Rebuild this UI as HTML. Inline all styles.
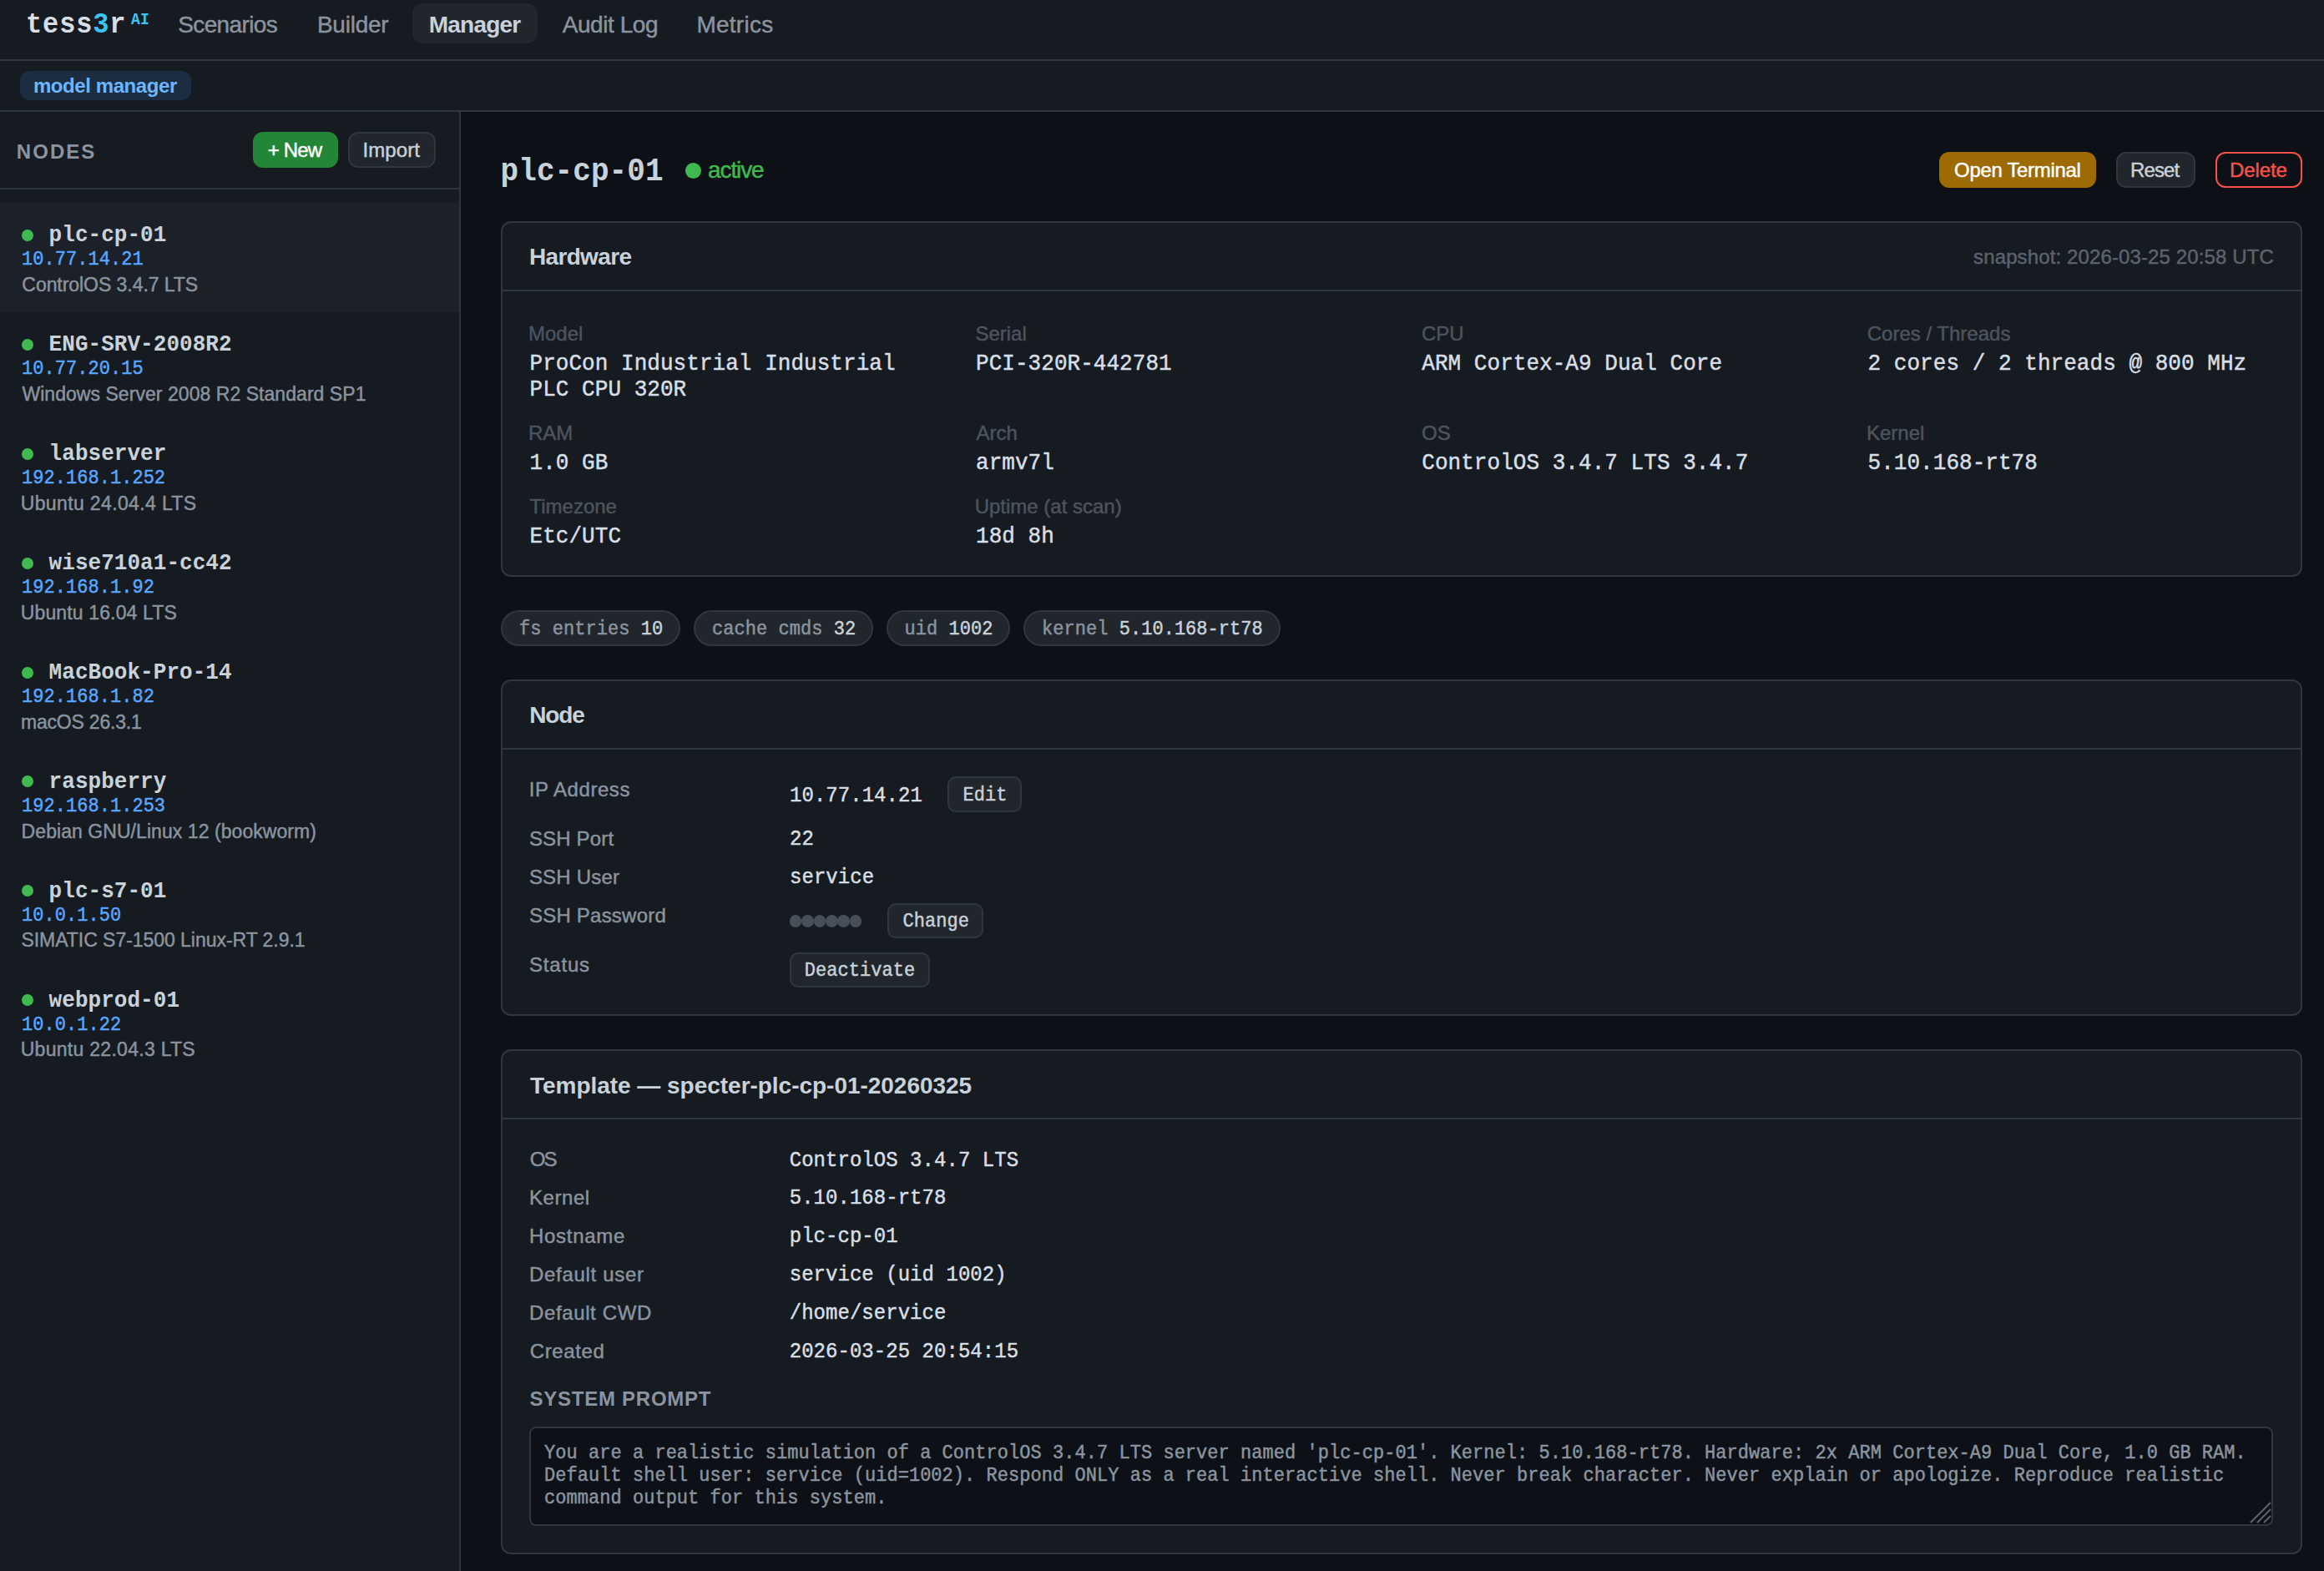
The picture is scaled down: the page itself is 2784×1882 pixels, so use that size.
<!DOCTYPE html>
<html><head><meta charset="utf-8"><title>tess3r - model manager</title>
<style>
html,body{margin:0;padding:0;}
body{width:2784px;height:1882px;overflow:hidden;background:#0d1117;position:relative;font-family:"Liberation Sans",sans-serif;}
.t{position:absolute;white-space:pre;}
@media (max-width:1500px){body{zoom:0.5;}}
</style></head><body>
<div style="position:absolute;left:0px;top:0px;width:2784px;height:71px;box-sizing:border-box;background:#161b22"></div>
<div style="position:absolute;left:0px;top:71px;width:2784px;height:2px;box-sizing:border-box;background:#30363d"></div>
<div style="position:absolute;left:0px;top:73px;width:2784px;height:59px;box-sizing:border-box;background:#161b22"></div>
<div style="position:absolute;left:0px;top:132px;width:2784px;height:2px;box-sizing:border-box;background:#30363d"></div>
<div style="position:absolute;left:24px;top:85px;width:205px;height:35px;box-sizing:border-box;background:#1c2d42;border-radius:12px"></div>
<div style="position:absolute;left:494px;top:4px;width:150px;height:48px;box-sizing:border-box;background:#21262d;border-radius:12px"></div>
<div style="position:absolute;left:0px;top:134px;width:550px;height:1748px;box-sizing:border-box;background:#161b22"></div>
<div style="position:absolute;left:550px;top:134px;width:2px;height:1748px;box-sizing:border-box;background:#30363d"></div>
<div style="position:absolute;left:0px;top:225px;width:550px;height:2px;box-sizing:border-box;background:#30363d"></div>
<div style="position:absolute;left:0px;top:243px;width:550px;height:131px;box-sizing:border-box;background:#1c2129"></div>
<div style="position:absolute;left:303px;top:158px;width:102px;height:43px;box-sizing:border-box;background:#238636;border-radius:12px"></div>
<div style="position:absolute;left:417px;top:158px;width:105px;height:43px;box-sizing:border-box;background:#21262d;border:2px solid #30363d;border-radius:12px"></div>
<div style="position:absolute;left:2323px;top:182px;width:188px;height:43px;box-sizing:border-box;background:#9e6a03;border-radius:12px"></div>
<div style="position:absolute;left:2535px;top:182px;width:95px;height:43px;box-sizing:border-box;background:#21262d;border:2px solid #30363d;border-radius:12px"></div>
<div style="position:absolute;left:2654px;top:182px;width:104px;height:43px;box-sizing:border-box;border:2px solid #f85149;border-radius:12px"></div>
<div style="position:absolute;left:821px;top:195px;width:19px;height:19px;box-sizing:border-box;background:#3fb950;border-radius:50%"></div>
<div style="position:absolute;left:600px;top:265px;width:2158px;height:426px;box-sizing:border-box;background:#161b22;border:2px solid #30363d;border-radius:12px"></div>
<div style="position:absolute;left:602px;top:347px;width:2154px;height:2px;box-sizing:border-box;background:#30363d"></div>
<div style="position:absolute;left:600px;top:814px;width:2158px;height:403px;box-sizing:border-box;background:#161b22;border:2px solid #30363d;border-radius:12px"></div>
<div style="position:absolute;left:602px;top:896px;width:2154px;height:2px;box-sizing:border-box;background:#30363d"></div>
<div style="position:absolute;left:600px;top:1257px;width:2158px;height:605px;box-sizing:border-box;background:#161b22;border:2px solid #30363d;border-radius:12px"></div>
<div style="position:absolute;left:602px;top:1339px;width:2154px;height:2px;box-sizing:border-box;background:#30363d"></div>
<div style="position:absolute;left:600px;top:731px;width:215px;height:43px;box-sizing:border-box;background:#21262d;border:2px solid #30363d;border-radius:22px"></div>
<div style="position:absolute;left:831px;top:731px;width:214.5px;height:43px;box-sizing:border-box;background:#21262d;border:2px solid #30363d;border-radius:22px"></div>
<div style="position:absolute;left:1061.5px;top:731px;width:148.5px;height:43px;box-sizing:border-box;background:#21262d;border:2px solid #30363d;border-radius:22px"></div>
<div style="position:absolute;left:1226px;top:731px;width:308px;height:43px;box-sizing:border-box;background:#21262d;border:2px solid #30363d;border-radius:22px"></div>
<div style="position:absolute;left:1135px;top:930px;width:89px;height:42.5px;box-sizing:border-box;background:#21262d;border:2px solid #30363d;border-radius:10px"></div>
<div style="position:absolute;left:1063px;top:1081.5px;width:115px;height:42.5px;box-sizing:border-box;background:#21262d;border:2px solid #30363d;border-radius:10px"></div>
<div style="position:absolute;left:946px;top:1140.5px;width:167.5px;height:42.0px;box-sizing:border-box;background:#21262d;border:2px solid #30363d;border-radius:10px"></div>
<div style="position:absolute;left:945.8000000000001px;top:1096.2px;width:14.6px;height:14.6px;box-sizing:border-box;background:#484f58;border-radius:50%"></div>
<div style="position:absolute;left:960.2px;top:1096.2px;width:14.6px;height:14.6px;box-sizing:border-box;background:#484f58;border-radius:50%"></div>
<div style="position:absolute;left:974.6px;top:1096.2px;width:14.6px;height:14.6px;box-sizing:border-box;background:#484f58;border-radius:50%"></div>
<div style="position:absolute;left:989.0000000000001px;top:1096.2px;width:14.6px;height:14.6px;box-sizing:border-box;background:#484f58;border-radius:50%"></div>
<div style="position:absolute;left:1003.4000000000001px;top:1096.2px;width:14.6px;height:14.6px;box-sizing:border-box;background:#484f58;border-radius:50%"></div>
<div style="position:absolute;left:1017.8px;top:1096.2px;width:14.6px;height:14.6px;box-sizing:border-box;background:#484f58;border-radius:50%"></div>
<div style="position:absolute;left:634px;top:1709px;width:2089px;height:119px;box-sizing:border-box;background:#0d1117;border:2px solid #30363d;border-radius:8px"></div>
<svg style="position:absolute;left:2693px;top:1797px" width="28" height="28" viewBox="0 0 28 28"><path d="M27 3 L3 27 M27 11 L11 27 M27 19 L19 27" stroke="#5b626b" stroke-width="2"/></svg>
<div style="position:absolute;left:26px;top:274.9px;width:14px;height:14.0px;box-sizing:border-box;background:#3fb950;border-radius:50%"></div>
<div style="position:absolute;left:26px;top:405.79999999999995px;width:14px;height:14.0px;box-sizing:border-box;background:#3fb950;border-radius:50%"></div>
<div style="position:absolute;left:26px;top:536.7px;width:14px;height:14.0px;box-sizing:border-box;background:#3fb950;border-radius:50%"></div>
<div style="position:absolute;left:26px;top:667.6px;width:14px;height:14.0px;box-sizing:border-box;background:#3fb950;border-radius:50%"></div>
<div style="position:absolute;left:26px;top:798.5px;width:14px;height:14.0px;box-sizing:border-box;background:#3fb950;border-radius:50%"></div>
<div style="position:absolute;left:26px;top:929.4px;width:14px;height:14.0px;box-sizing:border-box;background:#3fb950;border-radius:50%"></div>
<div style="position:absolute;left:26px;top:1060.3000000000002px;width:14px;height:14.0px;box-sizing:border-box;background:#3fb950;border-radius:50%"></div>
<div style="position:absolute;left:26px;top:1191.2px;width:14px;height:14.0px;box-sizing:border-box;background:#3fb950;border-radius:50%"></div>
<div id="logo" class="t" style="left:31.08px;top:13.15px;font:bold 32px/36.25px 'Liberation Mono', monospace;color:#d8dee4;letter-spacing:0.840px;transform:scaleY(1.08);transform-origin:0 26.64px"><span style="color:#d8dee4">tess</span><span style="color:#39c5f3">3</span><span style="color:#d8dee4">r</span></div>
<div id="ai" class="t" style="left:157.10px;top:14.01px;font:bold 18px/20.39px 'Liberation Mono', monospace;color:#39c5f3;letter-spacing:0.031px;transform:scaleY(1.08);transform-origin:0 14.98px">AI</div>
<div id="n1" class="t" style="left:213.23px;top:13.75px;font:normal 28px/31.276px 'Liberation Sans', sans-serif;color:#8b949e;letter-spacing:-0.625px;-webkit-text-stroke:0.45px">Scenarios</div>
<div id="n2" class="t" style="left:379.95px;top:13.75px;font:normal 28px/31.276px 'Liberation Sans', sans-serif;color:#8b949e;letter-spacing:-0.250px;-webkit-text-stroke:0.45px">Builder</div>
<div id="n3" class="t" style="left:513.63px;top:13.75px;font:bold 28px/31.276px 'Liberation Sans', sans-serif;color:#c9d1d9;letter-spacing:-0.750px">Manager</div>
<div id="n4" class="t" style="left:673.70px;top:13.75px;font:normal 28px/31.276px 'Liberation Sans', sans-serif;color:#8b949e;letter-spacing:-0.436px;-webkit-text-stroke:0.45px">Audit Log</div>
<div id="n5" class="t" style="left:834.45px;top:13.75px;font:normal 28px/31.276px 'Liberation Sans', sans-serif;color:#8b949e;letter-spacing:0.250px;-webkit-text-stroke:0.45px">Metrics</div>
<div id="badge" class="t" style="left:39.92px;top:89.51px;font:bold 24px/26.808px 'Liberation Sans', sans-serif;color:#6cb6ff;letter-spacing:-0.417px">model manager</div>
<div id="nodes" class="t" style="left:19.79px;top:168.61px;font:bold 24px/26.808px 'Liberation Sans', sans-serif;color:#8b949e;letter-spacing:2.050px">NODES</div>
<div id="new" class="t" style="left:320.83px;top:167.01px;font:normal 24px/26.808px 'Liberation Sans', sans-serif;color:#ffffff;letter-spacing:-0.850px;-webkit-text-stroke:0.45px">+ New</div>
<div id="import" class="t" style="left:434.39px;top:167.01px;font:normal 24px/26.808px 'Liberation Sans', sans-serif;color:#c9d1d9;letter-spacing:0.120px;-webkit-text-stroke:0.45px">Import</div>
<div id="nm0" class="t" style="left:58.60px;top:268.46px;font:bold 26px/29.453px 'Liberation Mono', monospace;color:#c9d1d9;letter-spacing:0.044px;transform:scaleY(1.08);transform-origin:0 21.64px">plc-cp-01</div>
<div id="ip0" class="t" style="left:26.00px;top:300.21px;font:normal 22px/24.922px 'Liberation Mono', monospace;color:#58a6ff;letter-spacing:0.037px;-webkit-text-stroke:0.45px;transform:scaleY(1.08);transform-origin:0 18.32px">10.77.14.21</div>
<div id="os0" class="t" style="left:26.33px;top:329.00px;font:normal 23px/25.691px 'Liberation Sans', sans-serif;color:#8b949e;letter-spacing:-0.050px;-webkit-text-stroke:0.45px">ControlOS 3.4.7 LTS</div>
<div id="nm1" class="t" style="left:58.60px;top:399.36px;font:bold 26px/29.453px 'Liberation Mono', monospace;color:#c9d1d9;letter-spacing:0.044px;transform:scaleY(1.08);transform-origin:0 21.64px">ENG-SRV-2008R2</div>
<div id="ip1" class="t" style="left:26.00px;top:431.11px;font:normal 22px/24.922px 'Liberation Mono', monospace;color:#58a6ff;letter-spacing:0.037px;-webkit-text-stroke:0.45px;transform:scaleY(1.08);transform-origin:0 18.32px">10.77.20.15</div>
<div id="os1" class="t" style="left:26.40px;top:459.91px;font:normal 23px/25.691px 'Liberation Sans', sans-serif;color:#8b949e;letter-spacing:0.049px;-webkit-text-stroke:0.45px">Windows Server 2008 R2 Standard SP1</div>
<div id="nm2" class="t" style="left:58.60px;top:530.26px;font:bold 26px/29.453px 'Liberation Mono', monospace;color:#c9d1d9;letter-spacing:0.044px;transform:scaleY(1.08);transform-origin:0 21.64px">labserver</div>
<div id="ip2" class="t" style="left:26.00px;top:562.00px;font:normal 22px/24.922px 'Liberation Mono', monospace;color:#58a6ff;letter-spacing:0.037px;-webkit-text-stroke:0.45px;transform:scaleY(1.08);transform-origin:0 18.32px">192.168.1.252</div>
<div id="os2" class="t" style="left:24.73px;top:590.81px;font:normal 23px/25.691px 'Liberation Sans', sans-serif;color:#8b949e;letter-spacing:0.365px;-webkit-text-stroke:0.45px">Ubuntu 24.04.4 LTS</div>
<div id="nm3" class="t" style="left:58.60px;top:661.15px;font:bold 26px/29.453px 'Liberation Mono', monospace;color:#c9d1d9;letter-spacing:0.044px;transform:scaleY(1.08);transform-origin:0 21.64px">wise710a1-cc42</div>
<div id="ip3" class="t" style="left:26.00px;top:692.91px;font:normal 22px/24.922px 'Liberation Mono', monospace;color:#58a6ff;letter-spacing:0.037px;-webkit-text-stroke:0.45px;transform:scaleY(1.08);transform-origin:0 18.32px">192.168.1.92</div>
<div id="os3" class="t" style="left:24.73px;top:721.69px;font:normal 23px/25.691px 'Liberation Sans', sans-serif;color:#8b949e;letter-spacing:0.140px;-webkit-text-stroke:0.45px">Ubuntu 16.04 LTS</div>
<div id="nm4" class="t" style="left:58.60px;top:792.05px;font:bold 26px/29.453px 'Liberation Mono', monospace;color:#c9d1d9;letter-spacing:0.044px;transform:scaleY(1.08);transform-origin:0 21.64px">MacBook-Pro-14</div>
<div id="ip4" class="t" style="left:26.00px;top:823.80px;font:normal 22px/24.922px 'Liberation Mono', monospace;color:#58a6ff;letter-spacing:0.037px;-webkit-text-stroke:0.45px;transform:scaleY(1.08);transform-origin:0 18.32px">192.168.1.82</div>
<div id="os4" class="t" style="left:24.97px;top:852.61px;font:normal 23px/25.691px 'Liberation Sans', sans-serif;color:#8b949e;letter-spacing:-0.199px;-webkit-text-stroke:0.45px">macOS 26.3.1</div>
<div id="nm5" class="t" style="left:58.60px;top:922.97px;font:bold 26px/29.453px 'Liberation Mono', monospace;color:#c9d1d9;letter-spacing:0.044px;transform:scaleY(1.08);transform-origin:0 21.64px">raspberry</div>
<div id="ip5" class="t" style="left:26.00px;top:954.71px;font:normal 22px/24.922px 'Liberation Mono', monospace;color:#58a6ff;letter-spacing:0.037px;-webkit-text-stroke:0.45px;transform:scaleY(1.08);transform-origin:0 18.32px">192.168.1.253</div>
<div id="os5" class="t" style="left:25.61px;top:983.51px;font:normal 23px/25.691px 'Liberation Sans', sans-serif;color:#8b949e;letter-spacing:0.062px;-webkit-text-stroke:0.45px">Debian GNU/Linux 12 (bookworm)</div>
<div id="nm6" class="t" style="left:58.60px;top:1053.85px;font:bold 26px/29.453px 'Liberation Mono', monospace;color:#c9d1d9;letter-spacing:0.044px;transform:scaleY(1.08);transform-origin:0 21.64px">plc-s7-01</div>
<div id="ip6" class="t" style="left:26.00px;top:1085.62px;font:normal 22px/24.922px 'Liberation Mono', monospace;color:#58a6ff;letter-spacing:0.037px;-webkit-text-stroke:0.45px;transform:scaleY(1.08);transform-origin:0 18.32px">10.0.1.50</div>
<div id="os6" class="t" style="left:25.46px;top:1114.41px;font:normal 23px/25.691px 'Liberation Sans', sans-serif;color:#8b949e;letter-spacing:-0.041px;-webkit-text-stroke:0.45px">SIMATIC S7-1500 Linux-RT 2.9.1</div>
<div id="nm7" class="t" style="left:58.60px;top:1184.76px;font:bold 26px/29.453px 'Liberation Mono', monospace;color:#c9d1d9;letter-spacing:0.044px;transform:scaleY(1.08);transform-origin:0 21.64px">webprod-01</div>
<div id="ip7" class="t" style="left:26.00px;top:1216.52px;font:normal 22px/24.922px 'Liberation Mono', monospace;color:#58a6ff;letter-spacing:0.037px;-webkit-text-stroke:0.45px;transform:scaleY(1.08);transform-origin:0 18.32px">10.0.1.22</div>
<div id="os7" class="t" style="left:24.73px;top:1245.31px;font:normal 23px/25.691px 'Liberation Sans', sans-serif;color:#8b949e;letter-spacing:0.282px;-webkit-text-stroke:0.45px">Ubuntu 22.04.3 LTS</div>
<div id="title" class="t" style="left:599.60px;top:187.34px;font:bold 36px/40.781px 'Liberation Mono', monospace;color:#c9d1d9;letter-spacing:0.061px;transform:scaleY(1.08);transform-origin:0 29.97px">plc-cp-01</div>
<div id="active" class="t" style="left:848.06px;top:187.50px;font:normal 28px/31.276px 'Liberation Sans', sans-serif;color:#3fb950;letter-spacing:-1.100px;-webkit-text-stroke:0.45px">active</div>
<div id="bt1" class="t" style="left:2341.11px;top:191.01px;font:normal 24px/26.808px 'Liberation Sans', sans-serif;color:#ffffff;letter-spacing:-0.333px;-webkit-text-stroke:0.45px">Open Terminal</div>
<div id="bt2" class="t" style="left:2552.03px;top:191.01px;font:normal 24px/26.808px 'Liberation Sans', sans-serif;color:#c9d1d9;letter-spacing:-0.875px;-webkit-text-stroke:0.45px">Reset</div>
<div id="bt3" class="t" style="left:2671.03px;top:191.01px;font:normal 24px/26.808px 'Liberation Sans', sans-serif;color:#f85149;letter-spacing:-0.100px;-webkit-text-stroke:0.45px">Delete</div>
<div id="hw" class="t" style="left:633.88px;top:292.00px;font:bold 28px/31.276px 'Liberation Sans', sans-serif;color:#c9d1d9;letter-spacing:-0.642px">Hardware</div>
<div id="snap" class="t" style="left:2364.08px;top:295.01px;font:normal 24px/26.808px 'Liberation Sans', sans-serif;color:#5c636c;letter-spacing:0.119px;-webkit-text-stroke:0.45px">snapshot: 2026-03-25 20:58 UTC</div>
<div id="hl0" class="t" style="left:633.03px;top:386.51px;font:normal 24px/26.808px 'Liberation Sans', sans-serif;color:#4d545d;letter-spacing:0.000px;-webkit-text-stroke:0.45px">Model</div>
<div id="hv0_0" class="t" style="left:634.50px;top:421.55px;font:normal 26px/29.453px 'Liberation Mono', monospace;color:#d8dee4;letter-spacing:0.044px;-webkit-text-stroke:0.45px;transform:scaleY(1.08);transform-origin:0 21.64px">ProCon Industrial Industrial</div>
<div id="hv0_1" class="t" style="left:634.50px;top:452.80px;font:normal 26px/29.453px 'Liberation Mono', monospace;color:#d8dee4;letter-spacing:0.044px;-webkit-text-stroke:0.45px;transform:scaleY(1.08);transform-origin:0 21.64px">PLC CPU 320R</div>
<div id="hl1" class="t" style="left:1168.41px;top:386.51px;font:normal 24px/26.808px 'Liberation Sans', sans-serif;color:#4d545d;letter-spacing:0.000px;-webkit-text-stroke:0.45px">Serial</div>
<div id="hv1_0" class="t" style="left:1169.00px;top:421.55px;font:normal 26px/29.453px 'Liberation Mono', monospace;color:#d8dee4;letter-spacing:0.044px;-webkit-text-stroke:0.45px;transform:scaleY(1.08);transform-origin:0 21.64px">PCI-320R-442781</div>
<div id="hl2" class="t" style="left:1703.03px;top:386.51px;font:normal 24px/26.808px 'Liberation Sans', sans-serif;color:#4d545d;letter-spacing:0.000px;-webkit-text-stroke:0.45px">CPU</div>
<div id="hv2_0" class="t" style="left:1703.25px;top:421.55px;font:normal 26px/29.453px 'Liberation Mono', monospace;color:#d8dee4;letter-spacing:0.044px;-webkit-text-stroke:0.45px;transform:scaleY(1.08);transform-origin:0 21.64px">ARM Cortex-A9 Dual Core</div>
<div id="hl3" class="t" style="left:2236.78px;top:386.51px;font:normal 24px/26.808px 'Liberation Sans', sans-serif;color:#4d545d;letter-spacing:0.000px;-webkit-text-stroke:0.45px">Cores / Threads</div>
<div id="hv3_0" class="t" style="left:2237.50px;top:421.55px;font:normal 26px/29.453px 'Liberation Mono', monospace;color:#d8dee4;letter-spacing:0.044px;-webkit-text-stroke:0.45px;transform:scaleY(1.08);transform-origin:0 21.64px">2 cores / 2 threads @ 800 MHz</div>
<div id="hl4" class="t" style="left:633.03px;top:506.01px;font:normal 24px/26.808px 'Liberation Sans', sans-serif;color:#4d545d;letter-spacing:0.000px;-webkit-text-stroke:0.45px">RAM</div>
<div id="hv4_0" class="t" style="left:634.50px;top:541.05px;font:normal 26px/29.453px 'Liberation Mono', monospace;color:#d8dee4;letter-spacing:0.044px;-webkit-text-stroke:0.45px;transform:scaleY(1.08);transform-origin:0 21.64px">1.0 GB</div>
<div id="hl5" class="t" style="left:1169.45px;top:506.01px;font:normal 24px/26.808px 'Liberation Sans', sans-serif;color:#4d545d;letter-spacing:0.000px;-webkit-text-stroke:0.45px">Arch</div>
<div id="hv5_0" class="t" style="left:1169.00px;top:541.05px;font:normal 26px/29.453px 'Liberation Mono', monospace;color:#d8dee4;letter-spacing:0.044px;-webkit-text-stroke:0.45px;transform:scaleY(1.08);transform-origin:0 21.64px">armv7l</div>
<div id="hl6" class="t" style="left:1703.11px;top:506.01px;font:normal 24px/26.808px 'Liberation Sans', sans-serif;color:#4d545d;letter-spacing:0.000px;-webkit-text-stroke:0.45px">OS</div>
<div id="hv6_0" class="t" style="left:1703.25px;top:541.05px;font:normal 26px/29.453px 'Liberation Mono', monospace;color:#d8dee4;letter-spacing:0.044px;-webkit-text-stroke:0.45px;transform:scaleY(1.08);transform-origin:0 21.64px">ControlOS 3.4.7 LTS 3.4.7</div>
<div id="hl7" class="t" style="left:2236.03px;top:506.01px;font:normal 24px/26.808px 'Liberation Sans', sans-serif;color:#4d545d;letter-spacing:0.000px;-webkit-text-stroke:0.45px">Kernel</div>
<div id="hv7_0" class="t" style="left:2237.50px;top:541.05px;font:normal 26px/29.453px 'Liberation Mono', monospace;color:#d8dee4;letter-spacing:0.044px;-webkit-text-stroke:0.45px;transform:scaleY(1.08);transform-origin:0 21.64px">5.10.168-rt78</div>
<div id="hl8" class="t" style="left:634.46px;top:594.01px;font:normal 24px/26.808px 'Liberation Sans', sans-serif;color:#4d545d;letter-spacing:0.000px;-webkit-text-stroke:0.45px">Timezone</div>
<div id="hv8_0" class="t" style="left:634.50px;top:629.05px;font:normal 26px/29.453px 'Liberation Mono', monospace;color:#d8dee4;letter-spacing:0.044px;-webkit-text-stroke:0.45px;transform:scaleY(1.08);transform-origin:0 21.64px">Etc/UTC</div>
<div id="hl9" class="t" style="left:1167.65px;top:594.01px;font:normal 24px/26.808px 'Liberation Sans', sans-serif;color:#4d545d;letter-spacing:0.000px;-webkit-text-stroke:0.45px">Uptime (at scan)</div>
<div id="hv9_0" class="t" style="left:1169.00px;top:629.05px;font:normal 26px/29.453px 'Liberation Mono', monospace;color:#d8dee4;letter-spacing:0.044px;-webkit-text-stroke:0.45px;transform:scaleY(1.08);transform-origin:0 21.64px">18d 8h</div>
<div id="pl0" class="t" style="left:622.00px;top:743.12px;font:normal 22px/24.922px 'Liberation Mono', monospace;color:#8b949e;letter-spacing:0.037px;-webkit-text-stroke:0.45px;transform:scaleY(1.08);transform-origin:0 18.32px"><span style="color:#8b949e">fs entries </span><span style="color:#c9d1d9">10</span></div>
<div id="pl1" class="t" style="left:853.00px;top:743.12px;font:normal 22px/24.922px 'Liberation Mono', monospace;color:#8b949e;letter-spacing:0.037px;-webkit-text-stroke:0.45px;transform:scaleY(1.08);transform-origin:0 18.32px"><span style="color:#8b949e">cache cmds </span><span style="color:#c9d1d9">32</span></div>
<div id="pl2" class="t" style="left:1083.50px;top:743.12px;font:normal 22px/24.922px 'Liberation Mono', monospace;color:#8b949e;letter-spacing:0.037px;-webkit-text-stroke:0.45px;transform:scaleY(1.08);transform-origin:0 18.32px"><span style="color:#8b949e">uid </span><span style="color:#c9d1d9">1002</span></div>
<div id="pl3" class="t" style="left:1248.00px;top:743.12px;font:normal 22px/24.922px 'Liberation Mono', monospace;color:#8b949e;letter-spacing:0.037px;-webkit-text-stroke:0.45px;transform:scaleY(1.08);transform-origin:0 18.32px"><span style="color:#8b949e">kernel </span><span style="color:#c9d1d9">5.10.168-rt78</span></div>
<div id="node" class="t" style="left:634.13px;top:841.31px;font:bold 28px/31.276px 'Liberation Sans', sans-serif;color:#c9d1d9;letter-spacing:-1.066px">Node</div>
<div id="nl0" class="t" style="left:633.79px;top:933.21px;font:normal 24px/26.808px 'Liberation Sans', sans-serif;color:#8b949e;letter-spacing:0.556px;-webkit-text-stroke:0.45px">IP Address</div>
<div id="nl1" class="t" style="left:633.91px;top:992.01px;font:normal 24px/26.808px 'Liberation Sans', sans-serif;color:#8b949e;letter-spacing:0.171px;-webkit-text-stroke:0.45px">SSH Port</div>
<div id="nl2" class="t" style="left:633.91px;top:1037.90px;font:normal 24px/26.808px 'Liberation Sans', sans-serif;color:#8b949e;letter-spacing:0.199px;-webkit-text-stroke:0.45px">SSH User</div>
<div id="nl3" class="t" style="left:633.91px;top:1083.80px;font:normal 24px/26.808px 'Liberation Sans', sans-serif;color:#8b949e;letter-spacing:0.227px;-webkit-text-stroke:0.45px">SSH Password</div>
<div id="nl4" class="t" style="left:633.91px;top:1142.90px;font:normal 24px/26.808px 'Liberation Sans', sans-serif;color:#8b949e;letter-spacing:0.820px;-webkit-text-stroke:0.45px">Status</div>
<div id="nv0" class="t" style="left:946.00px;top:939.50px;font:normal 24px/27.187px 'Liberation Mono', monospace;color:#d8dee4;letter-spacing:0.041px;-webkit-text-stroke:0.45px;transform:scaleY(1.08);transform-origin:0 19.98px">10.77.14.21</div>
<div id="nv1" class="t" style="left:946.00px;top:991.90px;font:normal 24px/27.187px 'Liberation Mono', monospace;color:#d8dee4;letter-spacing:0.041px;-webkit-text-stroke:0.45px;transform:scaleY(1.08);transform-origin:0 19.98px">22</div>
<div id="nv2" class="t" style="left:946.00px;top:1037.50px;font:normal 24px/27.187px 'Liberation Mono', monospace;color:#d8dee4;letter-spacing:0.041px;-webkit-text-stroke:0.45px;transform:scaleY(1.08);transform-origin:0 19.98px">service</div>
<div id="b_edit" class="t" style="left:1153.50px;top:941.80px;font:normal 22px/24.922px 'Liberation Mono', monospace;color:#c9d1d9;letter-spacing:0.037px;-webkit-text-stroke:0.45px;transform:scaleY(1.08);transform-origin:0 18.32px">Edit</div>
<div id="b_change" class="t" style="left:1081.50px;top:1093.02px;font:normal 22px/24.922px 'Liberation Mono', monospace;color:#c9d1d9;letter-spacing:0.037px;-webkit-text-stroke:0.45px;transform:scaleY(1.08);transform-origin:0 18.32px">Change</div>
<div id="b_deact" class="t" style="left:963.80px;top:1151.82px;font:normal 22px/24.922px 'Liberation Mono', monospace;color:#c9d1d9;letter-spacing:0.037px;-webkit-text-stroke:0.45px;transform:scaleY(1.08);transform-origin:0 18.32px">Deactivate</div>
<div id="tpl" class="t" style="left:634.99px;top:1284.71px;font:bold 28px/31.276px 'Liberation Sans', sans-serif;color:#c9d1d9;letter-spacing:-0.028px">Template — specter-plc-cp-01-20260325</div>
<div id="tl0" class="t" style="left:634.86px;top:1376.30px;font:normal 24px/26.808px 'Liberation Sans', sans-serif;color:#8b949e;letter-spacing:-2.000px;-webkit-text-stroke:0.45px">OS</div>
<div id="tv0" class="t" style="left:945.70px;top:1376.50px;font:normal 24px/27.187px 'Liberation Mono', monospace;color:#d8dee4;letter-spacing:0.041px;-webkit-text-stroke:0.45px;transform:scaleY(1.08);transform-origin:0 19.98px">ControlOS 3.4.7 LTS</div>
<div id="tl1" class="t" style="left:634.03px;top:1421.61px;font:normal 24px/26.808px 'Liberation Sans', sans-serif;color:#8b949e;letter-spacing:0.560px;-webkit-text-stroke:0.45px">Kernel</div>
<div id="tv1" class="t" style="left:945.70px;top:1421.81px;font:normal 24px/27.187px 'Liberation Mono', monospace;color:#d8dee4;letter-spacing:0.041px;-webkit-text-stroke:0.45px;transform:scaleY(1.08);transform-origin:0 19.98px">5.10.168-rt78</div>
<div id="tl2" class="t" style="left:634.03px;top:1468.01px;font:normal 24px/26.808px 'Liberation Sans', sans-serif;color:#8b949e;letter-spacing:0.714px;-webkit-text-stroke:0.45px">Hostname</div>
<div id="tv2" class="t" style="left:945.70px;top:1468.21px;font:normal 24px/27.187px 'Liberation Mono', monospace;color:#d8dee4;letter-spacing:0.041px;-webkit-text-stroke:0.45px;transform:scaleY(1.08);transform-origin:0 19.98px">plc-cp-01</div>
<div id="tl3" class="t" style="left:634.03px;top:1513.80px;font:normal 24px/26.808px 'Liberation Sans', sans-serif;color:#8b949e;letter-spacing:0.700px;-webkit-text-stroke:0.45px">Default user</div>
<div id="tv3" class="t" style="left:945.70px;top:1514.00px;font:normal 24px/27.187px 'Liberation Mono', monospace;color:#d8dee4;letter-spacing:0.041px;-webkit-text-stroke:0.45px;transform:scaleY(1.08);transform-origin:0 19.98px">service (uid 1002)</div>
<div id="tl4" class="t" style="left:634.03px;top:1559.71px;font:normal 24px/26.808px 'Liberation Sans', sans-serif;color:#8b949e;letter-spacing:0.620px;-webkit-text-stroke:0.45px">Default CWD</div>
<div id="tv4" class="t" style="left:945.70px;top:1559.90px;font:normal 24px/27.187px 'Liberation Mono', monospace;color:#d8dee4;letter-spacing:0.041px;-webkit-text-stroke:0.45px;transform:scaleY(1.08);transform-origin:0 19.98px">/home/service</div>
<div id="tl5" class="t" style="left:634.78px;top:1605.51px;font:normal 24px/26.808px 'Liberation Sans', sans-serif;color:#8b949e;letter-spacing:0.616px;-webkit-text-stroke:0.45px">Created</div>
<div id="tv5" class="t" style="left:945.70px;top:1605.71px;font:normal 24px/27.187px 'Liberation Mono', monospace;color:#d8dee4;letter-spacing:0.041px;-webkit-text-stroke:0.45px;transform:scaleY(1.08);transform-origin:0 19.98px">2026-03-25 20:54:15</div>
<div id="sp" class="t" style="left:634.61px;top:1662.71px;font:bold 24px/26.808px 'Liberation Sans', sans-serif;color:#8b949e;letter-spacing:0.733px">SYSTEM PROMPT</div>
<div id="pr0" class="t" style="left:652.00px;top:1730.12px;font:normal 22px/24.922px 'Liberation Mono', monospace;color:#8b949e;letter-spacing:0.037px;-webkit-text-stroke:0.45px;transform:scaleY(1.08);transform-origin:0 18.32px">You are a realistic simulation of a ControlOS 3.4.7 LTS server named &#x27;plc-cp-01&#x27;. Kernel: 5.10.168-rt78. Hardware: 2x ARM Cortex-A9 Dual Core, 1.0 GB RAM.</div>
<div id="pr1" class="t" style="left:652.00px;top:1756.62px;font:normal 22px/24.922px 'Liberation Mono', monospace;color:#8b949e;letter-spacing:0.037px;-webkit-text-stroke:0.45px;transform:scaleY(1.08);transform-origin:0 18.32px">Default shell user: service (uid=1002). Respond ONLY as a real interactive shell. Never break character. Never explain or apologize. Reproduce realistic</div>
<div id="pr2" class="t" style="left:652.00px;top:1783.52px;font:normal 22px/24.922px 'Liberation Mono', monospace;color:#8b949e;letter-spacing:0.037px;-webkit-text-stroke:0.45px;transform:scaleY(1.08);transform-origin:0 18.32px">command output for this system.</div>
</body></html>
